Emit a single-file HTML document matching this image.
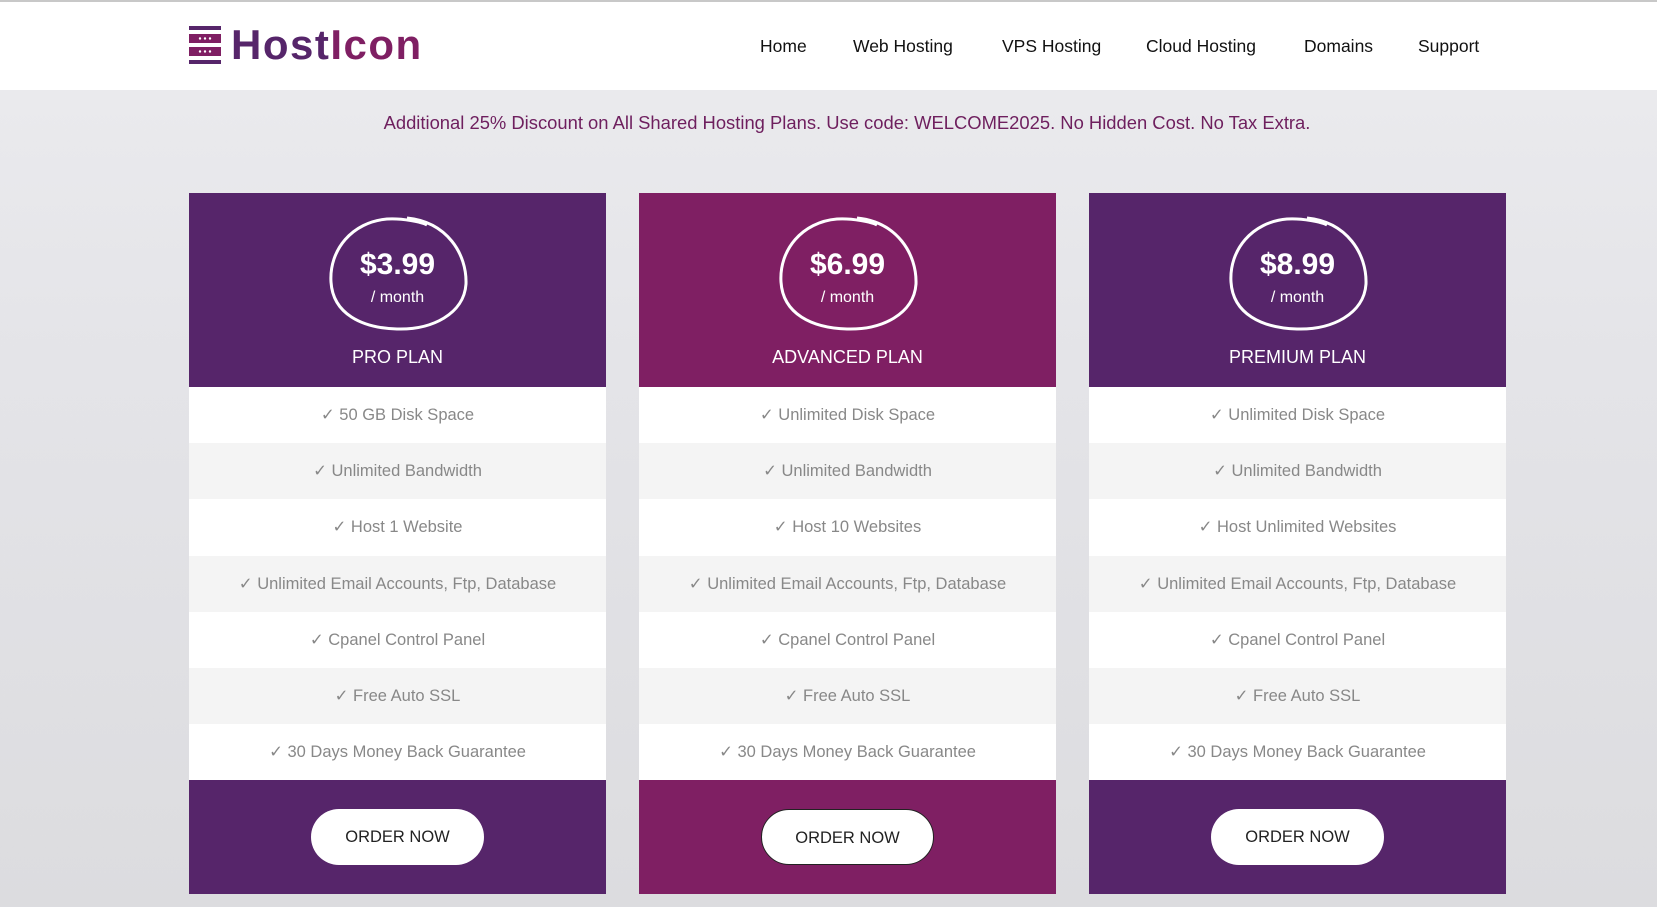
<!DOCTYPE html>
<html><head><meta charset="utf-8"><style>
*{margin:0;padding:0;box-sizing:border-box}
body{width:1657px;height:907px;overflow:hidden;font-family:"Liberation Sans",sans-serif;background:linear-gradient(180deg,#ececef 0%,#e4e4e8 40%,#dcdcdf 100%);position:relative}
.top{position:absolute;left:0;top:0;width:1657px;height:2px;background:#c8c8c8}
header{position:absolute;left:0;top:2px;width:1657px;height:88px;background:#fff}
.logo{position:absolute;left:189px;top:22px;height:44px}
.logo .txt{position:absolute;left:42px;top:-3px;font-weight:bold;font-size:42px;letter-spacing:1.5px;color:#56256a;white-space:nowrap}
.logo .txt span{color:#7f1f63}
nav{position:absolute;top:34px;font-size:17.5px;color:#111}
nav a{position:absolute;white-space:nowrap;color:#111;text-decoration:none}
.disc{position:absolute;top:112px;left:0;width:1694px;text-align:center;font-size:18.4px;color:#6e1f5e}
.card{position:absolute;top:193px;width:417px;height:703px}
.head{height:194px;position:relative;color:#fff;text-align:center}
.head svg{position:absolute;left:138px;top:21px}
.price{position:absolute;left:0;width:100%;top:55px;font-size:30px;font-weight:bold}
.mo{position:absolute;left:0;width:100%;top:96px;font-size:16px}
.pn{position:absolute;left:0;width:100%;top:154px;font-size:18px}
.row{height:56.2px;line-height:56px;text-align:center;font-size:16.5px;color:#888;background:#fff}
.row:nth-child(odd){background:#f4f4f4}
.foot{height:114px;position:relative}
.btn{position:absolute;left:122px;top:29px;width:173px;height:56px;border-radius:28px;background:#fff;color:#222;font-size:16.5px;text-align:center;line-height:56px}
.p{background:#56256a}.m{background:#7f1f63}
</style></head><body>
<div class="top"></div>
<header>
<div class="logo">
<svg width="32" height="40" viewBox="0 0 32 40" style="position:absolute;left:0;top:2px">
<rect x="0" y="0" width="32" height="4" fill="#56256a"/>
<rect x="0" y="8" width="32" height="9" fill="#7f1f63"/>
<rect x="0" y="21" width="32" height="9" fill="#7f1f63"/>
<rect x="0" y="34" width="32" height="4" fill="#56256a"/>
<g fill="#fff"><circle cx="11" cy="12.5" r="1.2"/><circle cx="16" cy="12.5" r="1.2"/><circle cx="21" cy="12.5" r="1.2"/><circle cx="11" cy="25.5" r="1.2"/><circle cx="16" cy="25.5" r="1.2"/><circle cx="21" cy="25.5" r="1.2"/></g>
</svg>
<div class="txt">Host<span>Icon</span></div>
</div>
<nav>
<a style="left:760px">Home</a><a style="left:853px">Web Hosting</a><a style="left:1002px">VPS Hosting</a><a style="left:1146px">Cloud Hosting</a><a style="left:1304px">Domains</a><a style="left:1418px">Support</a>
</nav>
</header>
<div class="disc">Additional 25% Discount on All Shared Hosting Plans. Use code: WELCOME2025. No Hidden Cost. No Tax Extra.</div>

<div class="card" style="left:189px">
<div class="head p"><svg width="142" height="120" viewBox="0 0 142 120"><path d="M80 4 C120 8 140 40 139 70 C137 100 105 116 70 115 C35 114 6 100 4 68 C2 36 25 8 60 5 C75 4 95 8 100 11" fill="none" stroke="#fff" stroke-width="3"/></svg>
<div class="price">$3.99</div><div class="mo">/ month</div><div class="pn">PRO PLAN</div></div>
<div class="row">✓ 50 GB Disk Space</div><div class="row">✓ Unlimited Bandwidth</div><div class="row">✓ Host 1 Website</div><div class="row">✓ Unlimited Email Accounts, Ftp, Database</div><div class="row">✓ Cpanel Control Panel</div><div class="row">✓ Free Auto SSL</div><div class="row">✓ 30 Days Money Back Guarantee</div>
<div class="foot p"><div class="btn">ORDER NOW</div></div>
</div>

<div class="card" style="left:639px">
<div class="head m"><svg width="142" height="120" viewBox="0 0 142 120"><path d="M80 4 C120 8 140 40 139 70 C137 100 105 116 70 115 C35 114 6 100 4 68 C2 36 25 8 60 5 C75 4 95 8 100 11" fill="none" stroke="#fff" stroke-width="3"/></svg>
<div class="price">$6.99</div><div class="mo">/ month</div><div class="pn">ADVANCED PLAN</div></div>
<div class="row">✓ Unlimited Disk Space</div><div class="row">✓ Unlimited Bandwidth</div><div class="row">✓ Host 10 Websites</div><div class="row">✓ Unlimited Email Accounts, Ftp, Database</div><div class="row">✓ Cpanel Control Panel</div><div class="row">✓ Free Auto SSL</div><div class="row">✓ 30 Days Money Back Guarantee</div>
<div class="foot m"><div class="btn" style="border:1.5px solid #222">ORDER NOW</div></div>
</div>

<div class="card" style="left:1089px">
<div class="head p"><svg width="142" height="120" viewBox="0 0 142 120"><path d="M80 4 C120 8 140 40 139 70 C137 100 105 116 70 115 C35 114 6 100 4 68 C2 36 25 8 60 5 C75 4 95 8 100 11" fill="none" stroke="#fff" stroke-width="3"/></svg>
<div class="price">$8.99</div><div class="mo">/ month</div><div class="pn">PREMIUM PLAN</div></div>
<div class="row">✓ Unlimited Disk Space</div><div class="row">✓ Unlimited Bandwidth</div><div class="row">✓ Host Unlimited Websites</div><div class="row">✓ Unlimited Email Accounts, Ftp, Database</div><div class="row">✓ Cpanel Control Panel</div><div class="row">✓ Free Auto SSL</div><div class="row">✓ 30 Days Money Back Guarantee</div>
<div class="foot p"><div class="btn">ORDER NOW</div></div>
</div>
</body></html>
